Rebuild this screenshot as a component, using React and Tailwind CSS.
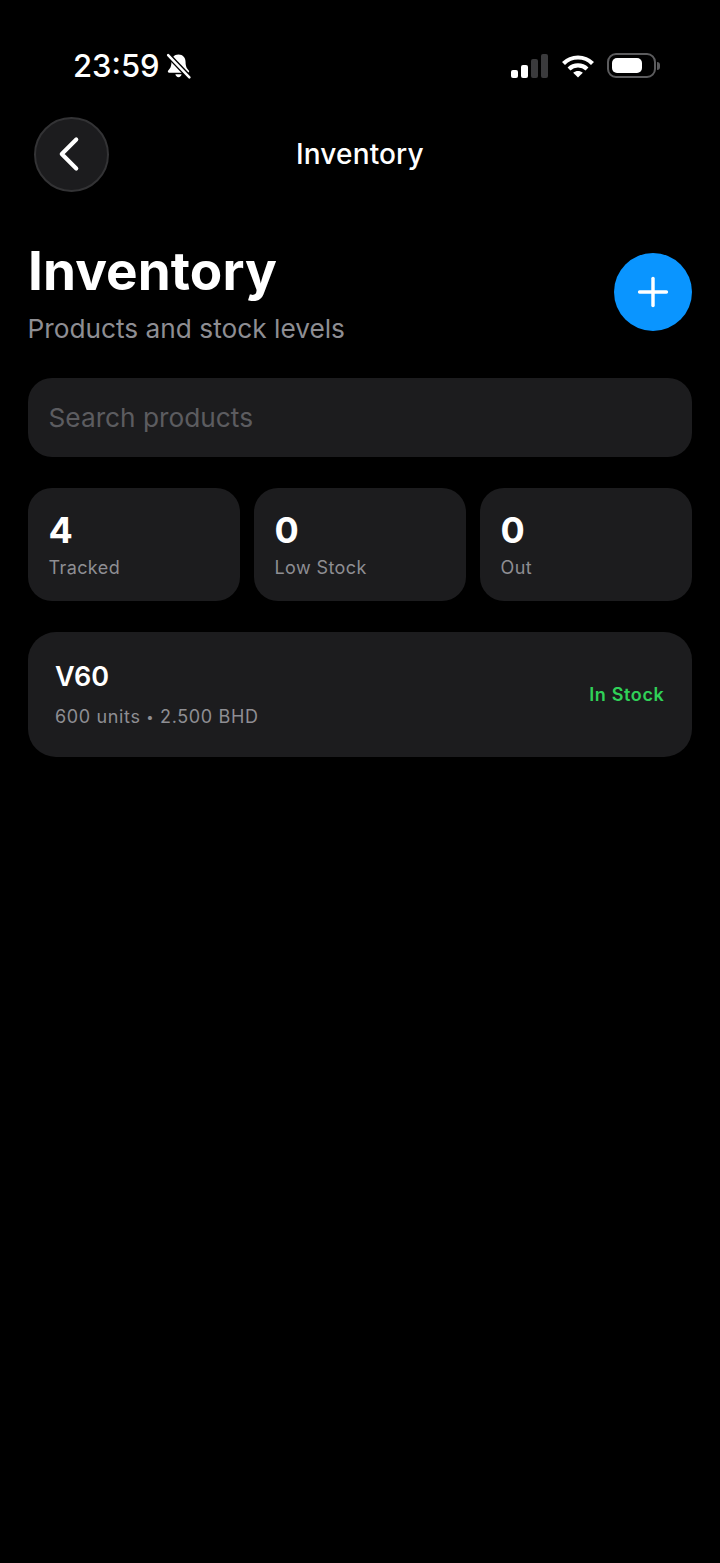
import { ChevronLeft, Plus } from 'lucide-react'

function BellOff() {
  return (
    <svg width="27" height="27" viewBox="0 0 26 26" fill="none">
      <path d="M13 1.500c-4.300 0-6.800 3.200-6.800 7.200 0 4.600-1.500 6.500-3.100 8.200-.8.900-.2 2.100 1 2.100h17.800c1.200 0 1.800-1.200 1-2.100-1.600-1.700-3.100-3.600-3.100-8.200 0-4-2.500-7.200-6.800-7.200z" fill="#fff" />
      <path d="M10 20.500c.4 1.600 1.500 2.800 3 2.800s2.600-1.200 3-2.800z" fill="#fff" />
      <path d="M3 2 23.500 23.500" stroke="#000" strokeWidth="5" />
      <path d="M3 2 23.500 23.500" stroke="#fff" strokeWidth="2.400" strokeLinecap="round" />
    </svg>
  )
}

function StatusIcons() {
  return (
    <div className="flex items-center">
      <div className="flex items-end gap-[3px] h-[24px]">
        <div className="w-[7px] h-[8px] rounded-[2px] bg-white" />
        <div className="w-[7px] h-[13px] rounded-[2px] bg-white" />
        <div className="w-[7px] h-[19px] rounded-[2px] bg-[#3a3a3c]" />
        <div className="w-[7px] h-[24px] rounded-[2px] bg-[#3a3a3c]" />
      </div>
      <svg className="ml-[13px]" width="34" height="24" viewBox="0 0 34 24" fill="none" stroke="#fff" strokeWidth="4.200">
        <path d="M2.500 9.500C10.500 1.500 23.500 1.500 31.500 9.500" />
        <path d="M8 15C13 10.200 21 10.200 26 15" />
        <path d="M17 23.500 12.200 18.800C15 16.300 19 16.300 21.800 18.800Z" fill="#fff" stroke="none" />
      </svg>
      <div className="ml-[12px] w-[49px] h-[25px] rounded-[9px] border-2 border-[#5c5c5e] p-[3px]">
        <div className="w-[30px] h-full rounded-[5px] bg-white" />
      </div>
      <div className="ml-[1px] w-[3px] h-[8px] rounded-r-full bg-[#5c5c5e]" />
    </div>
  )
}

function Stat({ value, label }) {
  return (
    <div className="h-[113px] rounded-[24px] bg-[#1c1c1e] pl-[20.500px] pt-[21px]">
      <div className="text-[36px] leading-[42px] font-bold text-white">{value}</div>
      <div className="mt-[5px] text-[18px] leading-[24px] tracking-[0.4px] text-[#8e8e93]">{label}</div>
    </div>
  )
}

export default function App() {
  return (
    <div className="min-h-[1563px] bg-black text-white font-['Inter',sans-serif]">
      {/* status bar */}
      <div className="h-[117px] flex items-start justify-between pl-[73px] pr-[60px] pt-[46px]">
        <div className="flex items-center h-[40px]">
          <span className="text-[31px] leading-[40px] font-medium">23:59</span>
          <span className="ml-[5px]"><BellOff /></span>
        </div>
        <div className="pt-[7px]"><StatusIcons /></div>
      </div>

      {/* nav */}
      <div className="h-[75px] flex items-center pl-[34px]">
        <div className="w-[75px] h-[75px] rounded-full bg-[#1c1c1e] border-2 border-[#333335] flex items-center justify-center">
          <ChevronLeft size={58} strokeWidth={1.7} className="-ml-[5px] -mt-[1px] shrink-0" />
        </div>
        <div className="w-[127px] ml-[187px] -mt-[2px] text-[28px] leading-[34px] tracking-[0.15px] font-medium whitespace-nowrap">Inventory</div>
      </div>

      {/* title */}
      <div className="mt-[44px] mx-[28px] flex items-start justify-between">
        <div>
          <h1 className="text-[53px] leading-[70px] font-bold tracking-[0.1px]">Inventory</h1>
          <p className="mt-[6px] -ml-[0.5px] text-[26.25px] leading-[34px] text-[#8e8e93]">Products and stock levels</p>
        </div>
        <button className="mt-[17px] w-[78px] h-[78px] rounded-full bg-[#0a95ff] flex items-center justify-center">
          <Plus size={46} strokeWidth={1.8} />
        </button>
      </div>

      {/* search */}
      <div className="mt-[32px] mx-[28px] h-[79px] rounded-[24px] bg-[#1c1c1e] flex items-center pl-[20.500px] text-[26.25px] text-[#5c5c60]">
        Search products
      </div>

      {/* stats */}
      <div className="mt-[31px] mx-[28px] grid grid-cols-3 gap-[14px]">
        <Stat value="4" label="Tracked" />
        <Stat value="0" label="Low Stock" />
        <Stat value="0" label="Out" />
      </div>

      {/* product row */}
      <div className="mt-[31px] mx-[28px] h-[125px] rounded-[28px] bg-[#1c1c1e] flex items-center justify-between pl-[27px] pr-[27.500px]">
        <div>
          <div className="-mt-[1px] text-[27px] leading-[34px] font-semibold">V60</div>
          <div className="mt-[11px] text-[18px] leading-[24px] tracking-[0.65px] text-[#8e8e93]">
            600 units <span className="text-[13px] align-[1px]">•</span> 2.500 BHD
          </div>
        </div>
        <div className="text-[18px] leading-[24px] tracking-[0.65px] font-semibold text-[#30d158]">In Stock</div>
      </div>
    </div>
  )
}
